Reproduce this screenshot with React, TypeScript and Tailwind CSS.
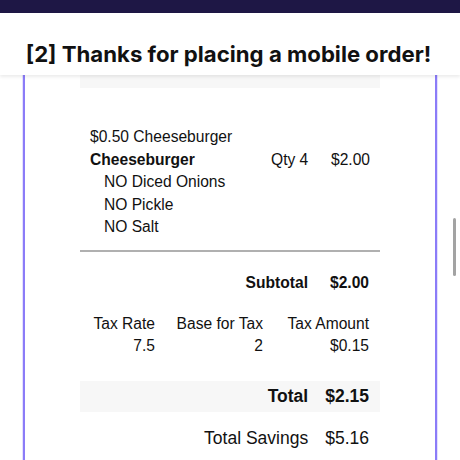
import React from 'react';

const modifiers = ['NO Diced Onions', 'NO Pickle', 'NO Salt'];

const taxRows = [{ rate: '7.5', base: '2', amount: '$0.15' }];

export default function App() {
  return (
    <div className="relative w-[460px] h-[460px] overflow-hidden bg-white">
      <div className="h-[13px] bg-[#1e1745]" />

      <div className="relative z-10 h-[62px] flex items-center justify-center bg-white shadow-[0_2px_3px_rgba(0,0,0,0.08)]">
        <h1 className="text-[22.2px] font-bold text-[#111] font-['Inter',sans-serif] pt-[19px] pr-[3px] whitespace-nowrap">
          [2] Thanks for placing a mobile order!
        </h1>
      </div>

      <div className="mx-[23px] h-[400px] border-x-2 border-[#8b7cf8] shadow-[0_0_0_1px_#e4e0ff] flex justify-center">
        <div className="w-[300px] font-['Liberation_Sans',Arial,sans-serif] text-[15.6px] text-[#111]">
          <div className="h-[13px] bg-[#f7f7f7]" />

          {/* Item */}
          <div className="px-[10px] pt-[38px] pb-[11px] leading-[22.5px] border-b-2 border-[#b0b0b0]">
            <p>$0.50 Cheeseburger</p>
            <div className="flex items-center whitespace-nowrap">
              <span className="flex-1 font-bold">Cheeseburger</span>
              <span className="w-[40px]">Qty 4</span>
              <span className="w-[59px] text-right">$2.00</span>
            </div>
            {modifiers.map((m) => (
              <p key={m} className="pl-[14px]">{m}</p>
            ))}
          </div>

          {/* Subtotal */}
          <div className="flex justify-end gap-[22px] px-[11px] pt-[20px] font-bold leading-[22px]">
            <span>Subtotal</span>
            <span>$2.00</span>
          </div>

          {/* Tax table */}
          <div className="pl-[10px] pr-[11px] pt-[19px] leading-[22px]">
            <div className="grid grid-cols-[65px_108px_106px] text-right">
              <span>Tax Rate</span>
              <span>Base for Tax</span>
              <span>Tax Amount</span>
              {taxRows.map((r) => (
                <React.Fragment key={r.rate}>
                  <span>{r.rate}</span>
                  <span>{r.base}</span>
                  <span>{r.amount}</span>
                </React.Fragment>
              ))}
            </div>
          </div>

          {/* Total */}
          <div className="mt-[24px] h-[31px] bg-[#f7f7f7] flex items-center justify-end gap-[17px] px-[11px] text-[17.5px] font-bold">
            <span>Total</span>
            <span>$2.15</span>
          </div>

          <div className="flex justify-end gap-[17px] px-[11px] pt-[15px] text-[17.5px] leading-[22px]">
            <span>Total Savings</span>
            <span>$5.16</span>
          </div>
        </div>
      </div>

      <div className="absolute left-[453px] top-[218px] w-[3px] h-[58px] rounded-full bg-[#a3a3a3]" />
    </div>
  );
}
